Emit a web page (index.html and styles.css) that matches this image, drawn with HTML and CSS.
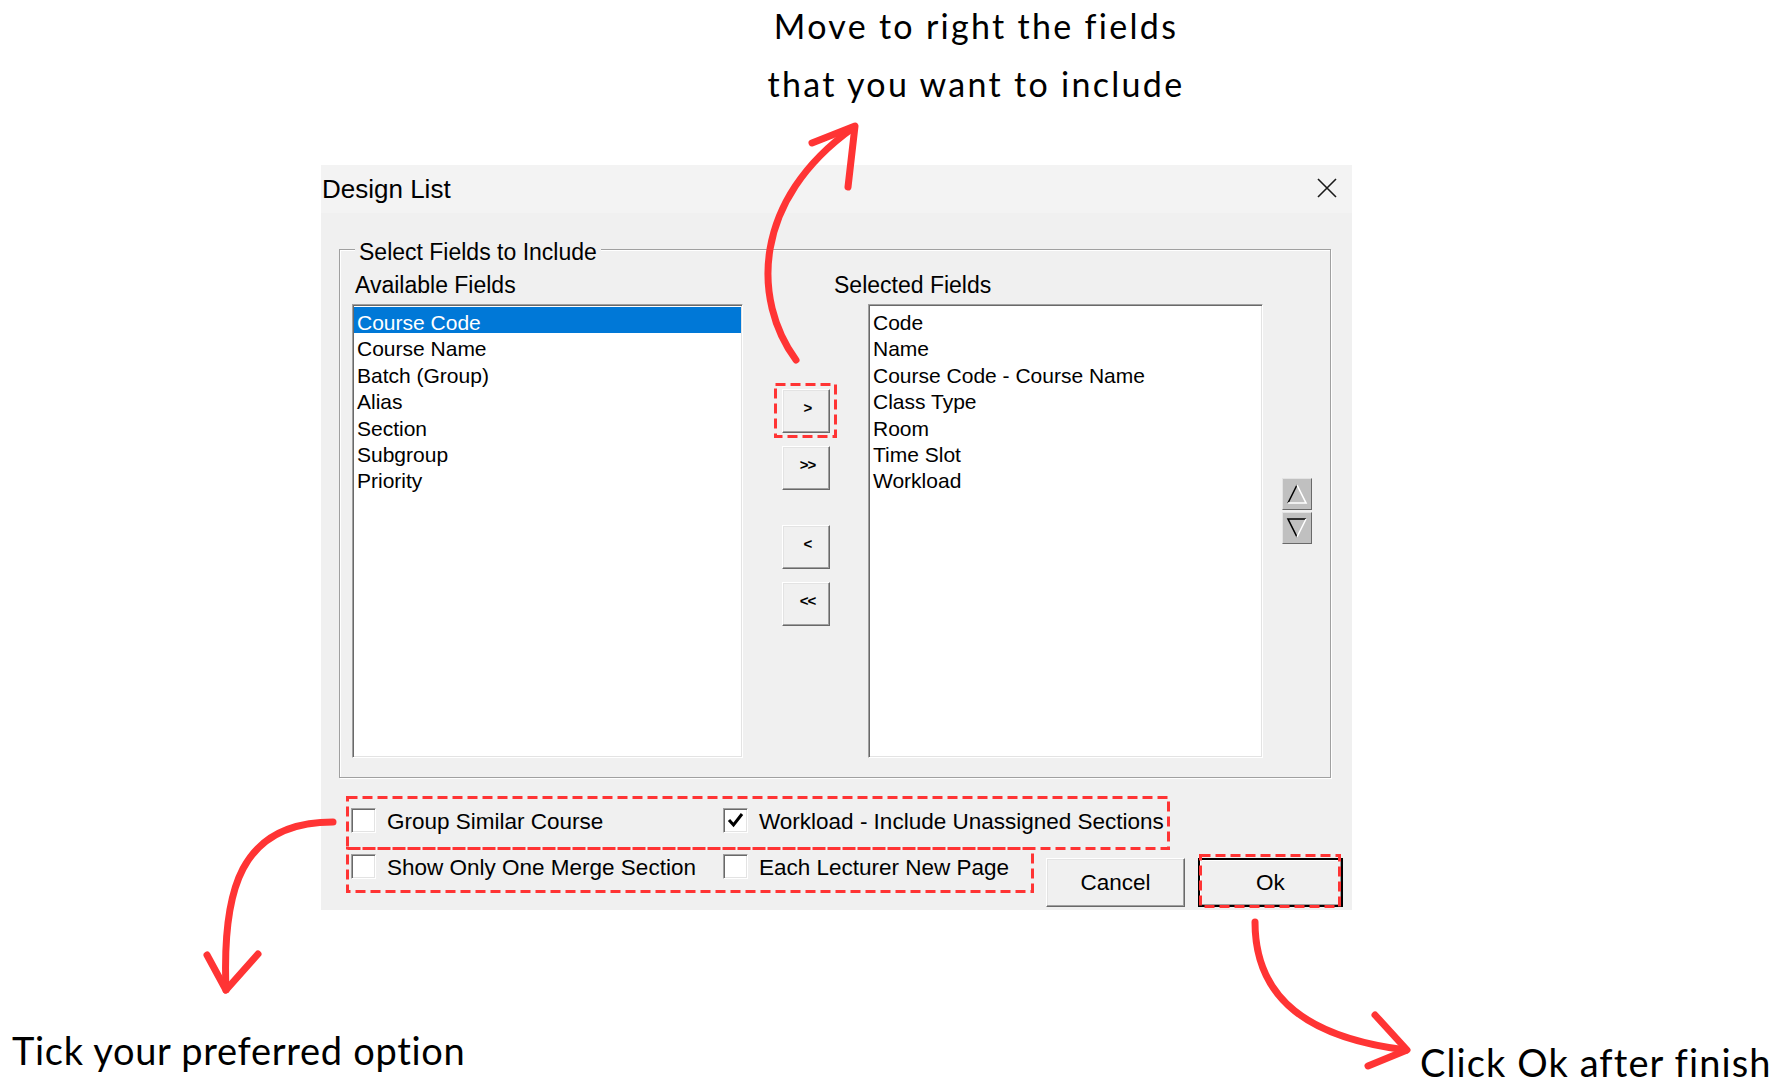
FILE: index.html
```html
<!DOCTYPE html>
<html lang="en">
<head>
<meta charset="utf-8">
<title>Design List</title>
<link rel="stylesheet" href="styles.css">
</head>
<body>
<div class="page">
  <div class="caption-top">
    <div class="caption-line">Move to right the fields</div>
    <div class="caption-line second">that you want to include</div>
  </div>

  <div class="dialog">
    <div class="titlebar">
      <span class="title">Design List</span>
      <svg class="close" width="20" height="20" viewBox="0 0 20 20"><path d="M1 1 L19 19 M19 1 L1 19" stroke="#1a1a1a" stroke-width="1.6" fill="none"/></svg>
    </div>
    <div class="dialog-body">
      <div class="group">
        <div class="group-title">Select Fields to Include</div>
        <div class="group-grid">
          <div class="field-label label-available">Available Fields</div>
          <div class="field-label label-selected">Selected Fields</div>

          <div class="listbox listbox-left">
            <div class="item selected">Course Code</div>
            <div class="item">Course Name</div>
            <div class="item">Batch (Group)</div>
            <div class="item">Alias</div>
            <div class="item">Section</div>
            <div class="item">Subgroup</div>
            <div class="item">Priority</div>
          </div>

          <div class="move-buttons">
            <div class="btn move-btn">&gt;</div>
            <div class="btn move-btn gap-small">&gt;&gt;</div>
            <div class="btn move-btn gap-large">&lt;</div>
            <div class="btn move-btn gap-small">&lt;&lt;</div>
          </div>

          <div class="listbox listbox-right">
            <div class="item">Code</div>
            <div class="item">Name</div>
            <div class="item">Course Code - Course Name</div>
            <div class="item">Class Type</div>
            <div class="item">Room</div>
            <div class="item">Time Slot</div>
            <div class="item">Workload</div>
          </div>

          <div class="updown">
            <div class="spin">
              <svg width="28" height="30" viewBox="0 0 28 30"><path d="M5 24 L14 6" stroke="#000" stroke-width="1.6" fill="none"/><path d="M14 6 L23 24 L5 24" stroke="#fff" stroke-width="1.6" fill="none"/></svg>
            </div>
            <div class="spin">
              <svg width="28" height="30" viewBox="0 0 28 30"><path d="M14 24 L5 6 L23 6" stroke="#000" stroke-width="1.6" fill="none"/><path d="M23 6 L14 24" stroke="#fff" stroke-width="1.6" fill="none"/></svg>
            </div>
          </div>
        </div>
      </div>

      <div class="options">
        <div class="opt-row">
          <div class="opt opt-first"><span class="checkbox"></span><span class="opt-label">Group Similar Course</span></div>
          <div class="opt"><span class="checkbox"><svg width="23" height="23" viewBox="0 0 23 23"><path d="M5 11 L9.5 16 L18 5" stroke="#000" stroke-width="3" fill="none"/></svg></span><span class="opt-label">Workload - Include Unassigned Sections</span></div>
        </div>
        <div class="opt-row">
          <div class="opt opt-first"><span class="checkbox"></span><span class="opt-label">Show Only One Merge Section</span></div>
          <div class="opt"><span class="checkbox"></span><span class="opt-label">Each Lecturer New Page</span></div>
          <div class="actions">
            <div class="btn btn-cancel">Cancel</div>
            <div class="btn btn-ok">Ok</div>
          </div>
        </div>
      </div>
    </div>
  </div>

  <div class="captions-bottom">
    <div class="caption-left">Tick your preferred option</div>
    <div class="caption-right">Click Ok after finish</div>
  </div>

  <svg class="annotations" width="1785" height="1089" viewBox="0 0 1785 1089">
    <g fill="none" stroke="#ff3434" stroke-width="3" stroke-dasharray="10 5">
      <rect x="775.5" y="384.5" width="60" height="52"/>
      <rect x="347.5" y="797.5" width="821" height="51"/>
      <rect x="347.5" y="848.5" width="685" height="43"/>
      <rect x="1200.5" y="855.5" width="139" height="51"/>
    </g>
    <g fill="none" stroke="#ff3434" stroke-width="7" stroke-linecap="round" stroke-linejoin="round">
      <path d="M796 360 C752 300, 752 200, 853 128"/>
      <path d="M812 143 L855 126 L848 187"/>
      <path d="M333 822 C240 822, 222 890, 226 990"/>
      <path d="M207 955 L226 990 L258 954"/>
      <path d="M1255 922 C1255 1000, 1310 1038, 1406 1050"/>
      <path d="M1375 1015 L1407 1050 L1368 1066"/>
    </g>
  </svg>
</div>
</body>
</html>
```

FILE: styles.css
```css
html, body {
  margin: 0;
  padding: 0;
  background: #fff;
}

.page {
  position: relative;
  width: 1785px;
  height: 1089px;
  overflow: hidden;
  font-family: "Liberation Sans", Arial, sans-serif;
  color: #000;
}

/* annotation captions */
.caption-top {
  width: 500px;
  margin-left: 726px;
  text-align: center;
  font-family: Lato, "Noto Sans", sans-serif;
  font-size: 34px;
  letter-spacing: 2.3px;
}

.caption-line {
  line-height: 52px;
  white-space: nowrap;
}

.caption-line.second {
  margin-top: 6px;
}

.captions-bottom {
  display: grid;
  grid-template-columns: 1408px auto;
  padding-left: 12px;
  margin-top: 117px;
  font-family: Lato, "Noto Sans", sans-serif;
  font-size: 38px;
  line-height: 46px;
  white-space: nowrap;
}

.caption-left {
  letter-spacing: 0.7px;
}

.caption-right {
  margin-top: 12px;
  letter-spacing: 1.1px;
}

/* dialog */
.dialog {
  margin-top: 55px;
  margin-left: 321px;
  width: 1031px;
  height: 745px;
  background: #f0f0f0;
  display: flex;
  flex-direction: column;
}

.titlebar {
  flex: none;
  height: 48px;
  background: #f3f3f3;
  display: flex;
  align-items: center;
  justify-content: space-between;
}

.title {
  font-size: 26px;
  line-height: 48px;
  padding-left: 1px;
}

.close {
  display: block;
  margin-right: 15px;
  margin-top: -3px;
}

.dialog-body {
  padding: 36px 9px 0 18px;
}

.group {
  margin-right: 12px;
  border: 1px solid #a0a0a0;
  box-shadow: inset 1px 1px 0 #fff, 1px 1px 0 #fff;
  padding: 0 18px 19px 12px;
}

.group-title {
  display: table;
  margin: -10px 0 0 3px;
  padding: 0 4px;
  background: #f0f0f0;
  font-size: 23px;
  line-height: 24px;
  white-space: nowrap;
}

.group-grid {
  display: grid;
  grid-template-columns: 391px 39px 48px 38px 395px 19px 30px;
  grid-template-rows: 24px 454px;
  row-gap: 7px;
  margin-top: 9px;
}

.field-label {
  grid-row: 1;
  font-size: 23px;
  line-height: 24px;
  padding-left: 3px;
  white-space: nowrap;
}

.label-available {
  grid-column: 1;
}

.label-selected {
  grid-column: 5;
  margin-left: -37px;
}

.listbox {
  grid-row: 2;
  background: #fff;
  border: 1px solid;
  border-color: #a0a0a0 #fff #fff #a0a0a0;
  box-shadow: inset 1px 1px 0 #696969, inset -1px -1px 0 #e3e3e3;
  padding: 2px 1px 0 1px;
}

.listbox-left {
  grid-column: 1;
}

.listbox-right {
  grid-column: 5;
}

.item {
  height: 26.4px;
  box-sizing: border-box;
  padding-top: 3px;
  padding-left: 3px;
  font-size: 21px;
  line-height: 26.4px;
  white-space: nowrap;
}

.item.selected {
  background: #0078d7;
  color: #fff;
}

.btn {
  box-sizing: border-box;
  background: #f0f0f0;
  border: 1px solid;
  border-color: #fff #696969 #696969 #fff;
  box-shadow: inset -1px -1px 0 #a0a0a0, inset 1px 1px 0 #e3e3e3;
  display: flex;
  align-items: center;
  justify-content: center;
}

.move-buttons {
  grid-column: 3;
  grid-row: 2;
  display: flex;
  flex-direction: column;
  padding-top: 85px;
}

.move-btn {
  height: 44px;
  padding: 0 0 7px 3px;
  font-size: 15px;
  font-weight: bold;
  letter-spacing: -1px;
}

.move-btn.gap-small {
  margin-top: 13px;
}

.move-btn.gap-large {
  margin-top: 35px;
}

.updown {
  grid-column: 7;
  grid-row: 2;
  display: flex;
  flex-direction: column;
  gap: 2px;
  padding-top: 174px;
}

.spin {
  height: 32px;
  box-sizing: border-box;
  background: #c0c0c0;
  border: 1px solid;
  border-color: #e3e3e3 #696969 #696969 #e3e3e3;
}

.spin svg {
  display: block;
}

/* options */
.options {
  margin-top: 19px;
}

.opt-row {
  display: flex;
  align-items: flex-start;
  margin-left: 12px;
}

.opt {
  height: 46px;
  display: flex;
  align-items: center;
  gap: 11px;
  font-size: 22.5px;
  white-space: nowrap;
}

.opt-first {
  flex: none;
  width: 372px;
}

.opt-label {
  line-height: 26px;
  padding-top: 4px;
}

.checkbox {
  flex: none;
  width: 25px;
  height: 25px;
  box-sizing: border-box;
  background: #fff;
  border: 1px solid;
  border-color: #a0a0a0 #fff #fff #a0a0a0;
  box-shadow: inset 1px 1px 0 #696969, inset -1px -1px 0 #e3e3e3;
}

.checkbox svg {
  display: block;
}

.actions {
  margin-left: auto;
  margin-top: 15px;
  display: flex;
  gap: 13px;
}

.btn-cancel,
.btn-ok {
  height: 49px;
  font-size: 22.5px;
}

.btn-cancel {
  width: 139px;
}

.btn-ok {
  width: 145px;
  border: 2px solid #000;
  box-shadow: inset 1px 1px 0 #fff, inset -1px -1px 0 #a0a0a0;
}

.annotations {
  position: absolute;
  left: 0;
  top: 0;
  pointer-events: none;
}
```
